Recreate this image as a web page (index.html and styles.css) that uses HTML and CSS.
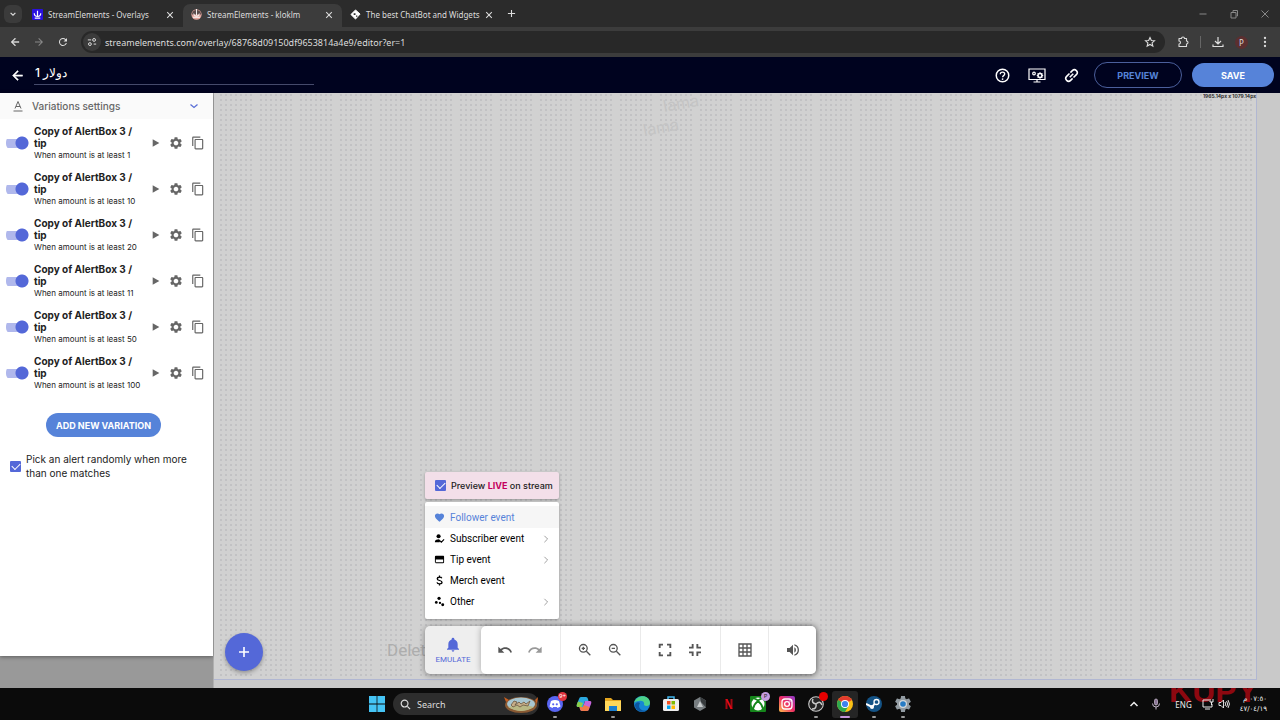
FILE: index.html
```
<!DOCTYPE html>
<html lang="en">
<head>
    <meta charset="UTF-8">
    <meta name="viewport" content="width=device-width, initial-scale=1.0">
    <title>StreamElements - kloklm</title>
    <link rel="stylesheet" href="styles.css">
</head>
<body>
    <svg class="sprite" aria-hidden="true">
        <symbol id="i-close" viewBox="0 0 10 10"><path d="M1.500 1.500l7 7M8.500 1.500l-7 7" fill="none" stroke="currentColor" stroke-width="1.300"/></symbol>
        <symbol id="i-back" viewBox="0 0 24 24"><path d="M20 11H7.830l5.590-5.590L12 4l-8 8 8 8 1.410-1.410L7.830 13H20v-2z" stroke="currentColor" stroke-width=".8"/></symbol>
        <symbol id="i-play" viewBox="0 0 24 24"><path d="M4 3v18l16-9z"/></symbol>
        <symbol id="i-gear" viewBox="0 0 24 24"><path d="M19.430 12.980c.04-.32.07-.64.07-.98s-.03-.66-.07-.98l2.110-1.650c.19-.15.24-.42.12-.64l-2-3.460c-.12-.22-.39-.3-.61-.22l-2.490 1c-.52-.4-1.080-.73-1.690-.98l-.38-2.650C14.460 2.180 14.250 2 14 2h-4c-.25 0-.46.18-.49.42l-.38 2.650c-.61.25-1.170.59-1.690.98l-2.490-1c-.23-.09-.49 0-.61.22l-2 3.460c-.13.22-.07.49.12.64l2.110 1.650c-.04.32-.07.65-.07.98s.03.66.07.98l-2.110 1.650c-.19.15-.24.42-.12.64l2 3.460c.12.22.39.3.61.22l2.490-1c.52.4 1.080.73 1.690.98l.38 2.650c.03.24.24.42.49.42h4c.25 0 .46-.18.49-.42l.38-2.650c.61-.25 1.170-.59 1.690-.98l2.490 1c.23.09.49 0 .61-.22l2-3.460c.12-.22.07-.49-.12-.64l-2.110-1.650zM12 16c-2.200 0-4-1.800-4-4s1.800-4 4-4 4 1.800 4 4-1.800 4-4 4z"/></symbol>
        <symbol id="i-copy" viewBox="0 0 24 24"><path d="M16 1H4c-1.100 0-2 .9-2 2v14h2V3h12V1zm3 4H8c-1.100 0-2 .9-2 2v14c0 1.100.9 2 2 2h11c1.100 0 2-.9 2-2V7c0-1.100-.9-2-2-2zm0 16H8V7h11v14z"/></symbol>
        <symbol id="i-right" viewBox="0 0 10 10"><path d="M3 1l4 4-4 4" fill="none" stroke="currentColor"/></symbol>
    </svg>

    <header class="tabs">
        <button class="tab-search" aria-label="Search tabs"><svg viewBox="0 0 10 10"><path d="M2 3.500l3 3 3-3" fill="none" stroke="currentColor" stroke-width="1.500"/></svg></button>
        <div class="tab">
            <svg class="favicon" viewBox="0 0 12 12"><rect width="12" height="12" rx="1" fill="#2a10e0"/><path d="M2.500 4.500a3.500 3.500 0 0 0 7 0M6 2v6M3 10h6" fill="none" stroke="#fff" stroke-width="1.300"/></svg>
            <span class="tab-name">StreamElements - Overlays</span>
            <button class="tab-close" aria-label="Close tab"><svg><use href="#i-close"/></svg></button>
        </div>
        <div class="tab active">
            <svg class="favicon" viewBox="0 0 12 12"><circle cx="6" cy="6" r="5.600" fill="#e0a39b"/><path d="M1 6a5 5 0 0 1 10 0z" fill="#5b4b4b"/><path d="M3 5a3 3 0 0 0 6 0M6 0v7M2 9h8" fill="none" stroke="#fff"/></svg>
            <span class="tab-name">StreamElements - kloklm</span>
            <button class="tab-close" aria-label="Close tab"><svg><use href="#i-close"/></svg></button>
        </div>
        <div class="tab">
            <svg class="favicon" viewBox="0 0 12 12"><path d="M6 1l5 4.500L6 11 1 6z" fill="#fff" stroke="#fff" stroke-linejoin="round"/><path d="M4 4.500h2v2H4zM6.500 7h1.500v1.500H6.500z" fill="#2b2b2b"/></svg>
            <span class="tab-name">The best ChatBot and Widgets</span>
            <button class="tab-close" aria-label="Close tab"><svg><use href="#i-close"/></svg></button>
        </div>
        <button class="tab-new" aria-label="New tab"><svg viewBox="0 0 10 10"><path d="M5 1v8M1 5h8" stroke="currentColor" stroke-width="1.200"/></svg></button>
        <div class="window-buttons">
            <button aria-label="Minimize"><svg viewBox="0 0 10 10"><path d="M1.500 5h7" stroke="currentColor"/></svg></button>
            <button aria-label="Restore"><svg viewBox="0 0 10 10"><path d="M2 3.500h5V9H2zM4 3V1.500h4.500V7H7.500" fill="none" stroke="currentColor"/></svg></button>
            <button aria-label="Close"><svg viewBox="0 0 10 10"><path d="M1.500 1.500l7 7M8.500 1.500l-7 7" fill="none" stroke="currentColor"/></svg></button>
        </div>
    </header>

    <div class="toolbar">
        <button aria-label="Back"><svg><use href="#i-back"/></svg></button>
        <button class="dim" aria-label="Forward"><svg viewBox="0 0 24 24"><path d="M4 11h12.170l-5.590-5.590L12 4l8 8-8 8-1.410-1.410L16.170 13H4v-2z"/></svg></button>
        <button aria-label="Reload"><svg viewBox="0 0 24 24"><path d="M17.650 6.350A8 8 0 1 0 19.730 14h-2.080A6 6 0 1 1 12 6c1.660 0 3.140.69 4.220 1.780L13 11h7V4z"/></svg></button>
        <div class="address">
            <span class="site-info"><svg viewBox="0 0 12 12"><path d="M1 3.500h4M8 8.500h3" stroke="#ddd" stroke-width="1.200"/><circle cx="8.500" cy="3.500" r="1.700" fill="none" stroke="#ddd" stroke-width="1.200"/><circle cx="3.500" cy="8.500" r="1.700" fill="none" stroke="#ddd" stroke-width="1.200"/></svg></span>
            <input type="text" aria-label="Address" value="streamelements.com/overlay/68768d09150df9653814a4e9/editor?er=1">
            <button aria-label="Bookmark"><svg viewBox="0 0 24 24"><path d="M12 3l2.700 6 6.300.6-4.800 4.300 1.500 6.300L12 17l-5.700 3.200 1.500-6.300L3 9.600 9.300 9z" fill="none" stroke="currentColor" stroke-width="2.200"/></svg></button>
        </div>
        <div class="browser-actions">
            <button aria-label="Extensions"><svg viewBox="0 0 24 24"><path d="M4 5h5c0-4 6-4 6 0h4v5c4 0 4 6 0 6v5H4v-5c4 0 4-6 0-6z" fill="none" stroke="currentColor" stroke-width="2.200" stroke-linejoin="round"/></svg></button>
            <button aria-label="Downloads"><svg viewBox="0 0 24 24"><path d="M12 2v13M6 10l6 6 6-6M2 17v4h20v-4" fill="none" stroke="currentColor" stroke-width="2.400"/></svg></button>
            <button class="avatar" aria-label="Profile">P</button>
            <button aria-label="Menu"><svg viewBox="0 0 24 24"><circle cx="12" cy="4" r="2.300"/><circle cx="12" cy="12" r="2.300"/><circle cx="12" cy="20" r="2.300"/></svg></button>
        </div>
    </div>

    <nav class="app-bar">
        <button class="icon-btn" aria-label="Back to overlays"><svg><use href="#i-back"/></svg></button>
        <input class="overlay-name" type="text" aria-label="Overlay name" value="1 دولار">
        <div class="app-actions">
            <button class="icon-btn" aria-label="Help"><svg viewBox="0 0 24 24"><circle cx="12" cy="12" r="10" fill="none" stroke="currentColor" stroke-width="2.400"/><path d="M8.500 10c0-4.800 7-4.300 7-.3 0 2.500-3.300 2.600-3.300 5" fill="none" stroke="currentColor" stroke-width="2.200"/><circle cx="12.100" cy="17.600" r="1.400"/></svg></button>
            <button class="icon-btn wide" aria-label="Resolution"><svg viewBox="0 0 18 15"><path d="M1 1h16v10.500H1zM5.500 14h7M9 11v3" fill="none" stroke="currentColor" stroke-width="1.200"/><circle cx="6" cy="5.500" r="1.300" fill="none" stroke="currentColor" stroke-width="1.200"/><circle cx="12" cy="7.500" r="2" fill="none" stroke="currentColor" stroke-width="1.500"/><path d="M12 4.300v1.500M12 9.200v1.500M8.800 7.500h1.500M13.700 7.500h1.500M9.700 5.200l1 1M13.300 8.800l1 1M14.300 5.200l-1 1M10.700 8.800l-1 1" stroke="currentColor"/></svg></button>
            <button class="icon-btn" aria-label="Copy link"><svg viewBox="0 0 24 24"><g transform="rotate(-45 12 12)" fill="none" stroke="currentColor" stroke-width="2.500"><path d="M12 7.500H5.500a4.500 4.500 0 0 0 0 9H10M12 16.500h6.500a4.500 4.500 0 0 0 0-9H14M8 12h8"/></g></svg></button>
            <button class="pill outline">PREVIEW</button>
            <button class="pill">SAVE</button>
        </div>
    </nav>

    <main class="editor">
        <aside class="sidebar">
            <div class="panel">
                <h2 class="panel-title">
                    <svg viewBox="0 0 12 12"><path d="M3 8.500L6 1.500l3 7M4 6.500h4M1.500 11h9" fill="none" stroke="currentColor"/></svg>
                    <span>Variations settings</span>
                    <svg class="chevron" viewBox="0 0 10 10"><path d="M1.500 3.500l3.500 3 3.500-3" fill="none" stroke="currentColor" stroke-width="1.300"/></svg>
                </h2>
                <ul class="variations">
                    <li>
                        <input class="switch" type="checkbox" id="v1" checked>
                        <label for="v1"><b>Copy of AlertBox 3 / tip</b><small>When amount is at least 1</small></label>
                        <button aria-label="Play"><svg class="play"><use href="#i-play"/></svg></button>
                        <button aria-label="Settings"><svg><use href="#i-gear"/></svg></button>
                        <button aria-label="Duplicate"><svg><use href="#i-copy"/></svg></button>
                    </li>
                    <li>
                        <input class="switch" type="checkbox" id="v2" checked>
                        <label for="v2"><b>Copy of AlertBox 3 / tip</b><small>When amount is at least 10</small></label>
                        <button aria-label="Play"><svg class="play"><use href="#i-play"/></svg></button>
                        <button aria-label="Settings"><svg><use href="#i-gear"/></svg></button>
                        <button aria-label="Duplicate"><svg><use href="#i-copy"/></svg></button>
                    </li>
                    <li>
                        <input class="switch" type="checkbox" id="v3" checked>
                        <label for="v3"><b>Copy of AlertBox 3 / tip</b><small>When amount is at least 20</small></label>
                        <button aria-label="Play"><svg class="play"><use href="#i-play"/></svg></button>
                        <button aria-label="Settings"><svg><use href="#i-gear"/></svg></button>
                        <button aria-label="Duplicate"><svg><use href="#i-copy"/></svg></button>
                    </li>
                    <li>
                        <input class="switch" type="checkbox" id="v4" checked>
                        <label for="v4"><b>Copy of AlertBox 3 / tip</b><small>When amount is at least 11</small></label>
                        <button aria-label="Play"><svg class="play"><use href="#i-play"/></svg></button>
                        <button aria-label="Settings"><svg><use href="#i-gear"/></svg></button>
                        <button aria-label="Duplicate"><svg><use href="#i-copy"/></svg></button>
                    </li>
                    <li>
                        <input class="switch" type="checkbox" id="v5" checked>
                        <label for="v5"><b>Copy of AlertBox 3 / tip</b><small>When amount is at least 50</small></label>
                        <button aria-label="Play"><svg class="play"><use href="#i-play"/></svg></button>
                        <button aria-label="Settings"><svg><use href="#i-gear"/></svg></button>
                        <button aria-label="Duplicate"><svg><use href="#i-copy"/></svg></button>
                    </li>
                    <li>
                        <input class="switch" type="checkbox" id="v6" checked>
                        <label for="v6"><b>Copy of AlertBox 3 / tip</b><small>When amount is at least 100</small></label>
                        <button aria-label="Play"><svg class="play"><use href="#i-play"/></svg></button>
                        <button aria-label="Settings"><svg><use href="#i-gear"/></svg></button>
                        <button aria-label="Duplicate"><svg><use href="#i-copy"/></svg></button>
                    </li>
                </ul>
                <button class="pill add">ADD NEW VARIATION</button>
                <div class="random">
                    <input class="check" type="checkbox" id="random" checked>
                    <label for="random">Pick an alert randomly when more than one matches</label>
                </div>
            </div>
        </aside>

        <section class="stage">
            <div class="canvas">
                <span class="ghost first">lama</span>
                <span class="ghost second">lama</span>
            </div>
            <span class="size">1965.14px x 1079.14px</span>
            <span class="hint">Delet</span>
            <button class="fab" aria-label="Add widget"><svg viewBox="0 0 12 12"><path d="M6 1v10M1 6h10" stroke="#fff" stroke-width="1.600"/></svg></button>

            <div class="dock">
                <div class="live">
                    <input class="check" type="checkbox" id="live" checked>
                    <label for="live">Preview <b>LIVE</b> on stream</label>
                </div>
                <div class="menu">
                    <button class="selected"><svg viewBox="0 0 24 24"><path d="M12 21.350l-1.450-1.320C5.400 15.360 2 12.280 2 8.500 2 5.420 4.420 3 7.500 3c1.740 0 3.410.81 4.500 2.090C13.090 3.810 14.760 3 16.500 3 19.580 3 22 5.420 22 8.500c0 3.780-3.400 6.860-8.550 11.540z"/></svg><span>Follower event</span></button>
                    <button><svg viewBox="0 0 24 24"><circle cx="10" cy="7" r="4.500"/><path d="M2 20v-2c0-3 5-4.500 9-4.500l3 3.500-2 3z"/><path d="M13 17l3 3 6-6" fill="none" stroke="currentColor" stroke-width="2.500"/></svg><span>Subscriber event</span><svg class="more"><use href="#i-right"/></svg></button>
                    <button><svg viewBox="0 0 24 24"><path d="M20 4H4c-1.110 0-2 .89-2 2v12c0 1.110.89 2 2 2h16c1.110 0 2-.89 2-2V6c0-1.110-.89-2-2-2zm0 14H4v-6h16v6z"/></svg><span>Tip event</span><svg class="more"><use href="#i-right"/></svg></button>
                    <button><svg viewBox="0 0 24 24"><path d="M17 7c-1-3-10-3-10 1 0 5 10.500 3 10.500 8 0 4.500-10 4.500-11 0M12 1v4M12 19v4" fill="none" stroke="currentColor" stroke-width="2.800"/></svg><span>Merch event</span></button>
                    <button><svg viewBox="0 0 24 24"><circle cx="11" cy="5" r="3.500"/><circle cx="5" cy="14" r="3"/><circle cx="13" cy="15" r="2.500"/><circle cx="19" cy="19" r="3.200"/></svg><span>Other</span><svg class="more"><use href="#i-right"/></svg></button>
                </div>
                <div class="tools">
                    <button class="emulate"><svg viewBox="0 0 24 24"><path d="M12 22c1.100 0 2-.9 2-2h-4c0 1.100.9 2 2 2zm7-6v-5c0-3.700-2-6.400-5-7.200V3a2 2 0 0 0-4 0v.8C7 4.600 5 7.300 5 11v5l-2 2v1h18v-1z"/></svg>EMULATE</button>
                    <div class="tool-bar">
                        <div class="group">
                            <button aria-label="Undo"><svg viewBox="0 0 24 24"><path d="M12.500 8c-2.650 0-5.050.99-6.900 2.600L2 7v9h9l-3.620-3.620c1.390-1.160 3.160-1.880 5.120-1.880 3.540 0 6.550 2.310 7.600 5.500l2.370-.78C21.080 11.030 17.150 8 12.500 8z"/></svg></button>
                            <button class="off" aria-label="Redo"><svg viewBox="0 0 24 24"><path d="M18.400 10.600C16.550 8.990 14.150 8 11.500 8c-4.650 0-8.580 3.030-9.960 7.220L3.900 16c1.050-3.190 4.050-5.500 7.600-5.500 1.950 0 3.730.72 5.120 1.880L13 16h9V7z"/></svg></button>
                        </div>
                        <div class="group">
                            <button aria-label="Zoom in"><svg viewBox="0 0 24 24"><circle cx="9.500" cy="9.500" r="5.800" fill="none" stroke="currentColor" stroke-width="2"/><path d="M14 14l6 6M9.500 7v5M7 9.500h5" stroke="currentColor" stroke-width="2"/></svg></button>
                            <button aria-label="Zoom out"><svg viewBox="0 0 24 24"><circle cx="9.500" cy="9.500" r="5.800" fill="none" stroke="currentColor" stroke-width="2"/><path d="M14 14l6 6M7 9.500h5" stroke="currentColor" stroke-width="2"/></svg></button>
                        </div>
                        <div class="group">
                            <button aria-label="Fit"><svg viewBox="0 0 24 24"><path d="M4 9V4h5M15 4h5v5M20 15v5h-5M9 20H4v-5" fill="none" stroke="currentColor" stroke-width="2.800"/></svg></button>
                            <button aria-label="Shrink"><svg viewBox="0 0 24 24"><path d="M3 8.500h5.500V3M15.500 3v5.500H21M21 15.500h-5.500V21M8.500 21v-5.500H3" fill="none" stroke="currentColor" stroke-width="2.800"/></svg></button>
                        </div>
                        <div class="group">
                            <button aria-label="Grid"><svg viewBox="0 0 24 24"><path d="M3 3h18v18H3zM9 3v18M15 3v18M3 9h18M3 15h18" fill="none" stroke="currentColor" stroke-width="2"/></svg></button>
                        </div>
                        <div class="group">
                            <button aria-label="Sound"><svg viewBox="0 0 24 24"><path d="M3 9v6h4l5 5V4L7 9H3zm13.500 3A4.500 4.500 0 0 0 14 7.970v8.050A4.500 4.500 0 0 0 16.500 12zM14 3.230v2.060a7 7 0 0 1 0 13.420v2.060a9 9 0 0 0 0-17.540z"/></svg></button>
                        </div>
                    </div>
                </div>
            </div>
        </section>
    </main>

    <footer class="taskbar">
        <span class="wallpaper-text">KUPY</span>
        <div class="apps">
            <button class="app" aria-label="Start"><svg viewBox="0 0 16 16"><path d="M0 0h7.600v7.600H0zM8.400 0H16v7.600H8.400zM0 8.400h7.600V16H0zM8.400 8.400H16V16H8.400z" fill="#45c4f5"/></svg></button>
            <div class="search">
                <svg class="lens" viewBox="0 0 12 12"><circle cx="5" cy="5" r="3.700" fill="none" stroke="#ddd" stroke-width="1.300"/><path d="M8 8l3 3" stroke="#ddd" stroke-width="1.400"/></svg>
                <input type="search" aria-label="Search" placeholder="Search">
                <svg class="doodle" viewBox="0 0 34 17"><ellipse cx="17" cy="9" rx="16" ry="8" fill="#8a5a33"/><ellipse cx="17" cy="8" rx="14" ry="6.500" fill="#a8c6d0"/><path d="M4 11q13-4 26 0-13 8-26 0z" fill="#b9b884"/><path d="M7 9l3-4 3 1-2 3 4-3 2 2 3-2 2 2 4-3-2 5-5-1-3 2-3-2-4 2z" fill="#c7ae88" stroke="#6b573f" stroke-width=".8"/><path d="M2 6L0 1l5 3zM31 4l3-3-1 7z" fill="#c85f20"/></svg>
            </div>
            <button class="app open" aria-label="Discord"><svg viewBox="0 0 16 16"><circle cx="8" cy="8" r="8" fill="#5865f2"/><path d="M4 5q4-2 8 0l1.500 5.500L10.500 12l-.7-1H6.200l-.7 1-3-1.500z" fill="#fff"/><circle cx="6.200" cy="8.300" r="1.100" fill="#5865f2"/><circle cx="9.800" cy="8.300" r="1.100" fill="#5865f2"/></svg><span class="badge">9+</span></button>
            <button class="app" aria-label="Copilot"><svg viewBox="0 0 16 16"><path d="M5 1h5q1.500 0 2 2l.5 2H9L7 11H2Q0 11 1 8l2-5q.5-2 2-2z" fill="#2ba9e0"/><path d="M2 5.500L7 7l-1.500 4H2Q0 11 1 8z" fill="#8bd04b"/><path d="M11 15H6q-1.500 0-2-2l-.5-2H7l2-6h5q2 0 1 3l-2 5q-.5 2-2 2z" fill="#c565dc"/><path d="M11 15H6q-1.500 0-2-2l-.5-2H7l.6-2 6 2-.6 2q-.5 2-2 2z" fill="#f07a4a"/></svg></button>
            <button class="app open" aria-label="Files"><svg viewBox="0 0 16 16"><path d="M0 2h6l2 2h8v11H0z" fill="#e5a61f"/><path d="M0 5h16v10H0z" fill="#ffd75a"/><path d="M4 10h8v5H4z" fill="#1b7fd1"/></svg></button>
            <button class="app" aria-label="Edge"><svg viewBox="0 0 16 16"><circle cx="8" cy="8" r="8" fill="#1687d4"/><path d="M0 7C2-2 16-2 16 7c0 3-4 4-6 2 1-3-2-5-5-4-3 0-4 1-5 2z" fill="#4cd28a"/><path d="M6 7c-3 5 2 9 7 7-4 4-12 1-12-5 0-2 3-4 5-2z" fill="#0c56a0"/></svg></button>
            <button class="app" aria-label="Store"><svg viewBox="0 0 16 16"><path d="M5 4V1h6v3" fill="none" stroke="#43b6ee" stroke-width="1.500"/><rect y="3" width="16" height="12" rx="1.500" fill="#eee"/><path d="M4 5h3.500v3.500H4z" fill="#f25022"/><path d="M8.500 5H12v3.500H8.500z" fill="#7fba00"/><path d="M4 9.500h3.500V13H4z" fill="#00a4ef"/><path d="M8.500 9.500H12V13H8.500z" fill="#ffb900"/></svg></button>
            <button class="app" aria-label="Cube"><svg viewBox="0 0 16 16"><path d="M8 1l6 3.500v7L8 15l-6-3.500v-7z" fill="#777d80"/><path d="M8 1l6 3.500v7L9 6z" fill="#373b3d"/><path d="M8 5l3 6-6 0z" fill="#c8cccd"/></svg></button>
            <button class="app" aria-label="Netflix"><svg viewBox="0 0 16 16"><path d="M5.500 3v10M10.500 3v10" stroke="#a40912" stroke-width="2"/><path d="M4.500 3h2l5 10h-2z" fill="#e50914"/></svg></button>
            <button class="app" aria-label="Xbox"><svg viewBox="0 0 16 16"><rect width="16" height="16" rx="1" fill="#15861b"/><circle cx="8" cy="8" r="6.500" fill="#fff"/><path d="M3 13Q4 8 8 5q4 3 5 8M4 2.500Q6 3 8 4.500 10 3 12 2.500" fill="none" stroke="#15861b" stroke-width="1.800"/></svg><span class="badge lilac">P</span></button>
            <button class="app" aria-label="Instagram"><svg viewBox="0 0 16 16"><defs><linearGradient id="insta" x1="0" y1="1" x2="1" y2="0"><stop offset="0" stop-color="#fdc04a"/><stop offset=".5" stop-color="#ee2d64"/><stop offset="1" stop-color="#8b3bd0"/></linearGradient></defs><rect width="16" height="16" rx="2" fill="url(#insta)"/><rect x="3" y="3" width="10" height="10" rx="3" fill="none" stroke="#fff" stroke-width="1.300"/><circle cx="8" cy="8" r="2.400" fill="none" stroke="#fff" stroke-width="1.300"/><circle cx="11" cy="5" r=".7" fill="#fff"/></svg></button>
            <button class="app open" aria-label="OBS"><svg viewBox="0 0 16 16"><circle cx="8" cy="8" r="7.300" fill="#252525" stroke="#c8c8c8" stroke-width="1.100"/><path d="M8 8Q3 7 5 3M8 8q4-4 6 1M8 8q1 5-4 5" fill="none" stroke="#c8c8c8" stroke-width="1.500"/></svg><span class="badge red"></span></button>
            <button class="app open current" aria-label="Chrome"><svg viewBox="0 0 16 16"><circle cx="8" cy="8" r="8" fill="#fbc116"/><path d="M8 8L1.100 4A8 8 0 0 1 14.900 4z" fill="#e33b2e"/><path d="M8 8v0L1.100 4A8 8 0 0 0 8 16l3.500-6z" fill="#2da94f"/><circle cx="8" cy="8" r="4" fill="#fff"/><circle cx="8" cy="8" r="3.100" fill="#3d82ee"/></svg></button>
            <button class="app open" aria-label="Steam"><svg viewBox="0 0 16 16"><circle cx="8" cy="8" r="8" fill="#145386"/><path d="M0 8l6 3 4-5" fill="none" stroke="#fff" stroke-width="2"/><circle cx="10.500" cy="6" r="2.500" fill="#145386" stroke="#fff" stroke-width="1.300"/><circle cx="6" cy="11" r="2" fill="#fff"/></svg></button>
            <button class="app open" aria-label="Settings"><svg viewBox="2 2 20 20"><use href="#i-gear" width="24" height="24" fill="#929ba2"/><circle cx="12" cy="12" r="5" fill="#d6dadd"/><circle cx="12" cy="12" r="3.500" fill="#277bc4"/></svg></button>
        </div>
        <div class="tray">
            <svg viewBox="0 0 12 12"><path d="M2.500 8L6 4.500 9.500 8" fill="none" stroke="currentColor" stroke-width="1.500"/></svg>
            <svg viewBox="0 0 12 12"><rect x="4.500" y="1" width="3" height="6" rx="1.500" fill="#8a7495" stroke="#c2b5c9" stroke-width=".8"/><path d="M2.500 5.500a3.500 3.500 0 0 0 7 0M6 9v2.500" fill="none" stroke="#c2b5c9"/></svg>
            <span class="lang">ENG</span>
            <span class="status">
                <svg viewBox="0 0 12 12"><path d="M7 2H1v7h9V6M3 11h5M8 1v3h3V1M9.500 4v3" fill="none" stroke="currentColor"/></svg>
                <svg viewBox="0 0 12 12"><path d="M1 4.500h2L5.500 2v8L3 7.500H1zM7 4q1.500 2 0 4M8.500 3q2.500 3 0 6M10 2q3 4 0 8" fill="none" stroke="currentColor" stroke-width=".9"/></svg>
            </span>
            <span class="clock" dir="rtl" lang="ar"><span>٠٧:٥٠ م</span><span dir="ltr">٤٧/٠٤/١٩</span></span>
        </div>
    </footer>
</body>
</html>
```
FILE: styles.css
```
* {
    box-sizing: border-box;
}
body {
    margin: 0;
    min-height: 100vh;
    display: flex;
    flex-direction: column;
    font-family: Inter, "Noto Sans", sans-serif;
    font-size: 9px;
    color: #222;
    background: #0b0b0b;
}
button {
    display: flex;
    align-items: center;
    justify-content: center;
    padding: 0;
    border: none;
    background: none;
    color: inherit;
    font: inherit;
    cursor: pointer;
}
input {
    margin: 0;
    font: inherit;
    color: inherit;
}
svg {
    display: block;
    width: 12px;
    height: 12px;
    flex: none;
    fill: currentColor;
}
.sprite {
    position: absolute;
    width: 0;
    height: 0;
}

/* browser */
.tabs {
    display: flex;
    align-items: center;
    height: 27px;
    padding-left: 4px;
    background: #2b2b2b;
    color: #ddd;
    font-family: "Noto Sans", sans-serif;
    font-size: 8px;
}
.tab-search {
    width: 18px;
    height: 18px;
    margin-right: 2px;
    border-radius: 6px;
    background: #3b3b3b;
}
.tab-search svg,
.tab-close svg {
    width: 8px;
    height: 8px;
}
.tab {
    display: flex;
    align-items: center;
    gap: 5px;
    width: 159px;
    height: 23px;
    padding: 0 9px 2px 8px;
    border-radius: 7px 7px 0 0;
    align-self: flex-end;
}
.tab.active {
    background: #3c3c3c;
}
.favicon {
    width: 11px;
    height: 11px;
}
.tab-name {
    flex: 1;
    white-space: nowrap;
}
.tab-new {
    margin-left: 6px;
}
.tab-new svg {
    width: 9px;
    height: 9px;
}
.window-buttons {
    display: flex;
    gap: 21px;
    margin-left: auto;
    padding-right: 10px;
    color: #888;
}
.window-buttons svg {
    width: 10px;
    height: 10px;
}
.toolbar {
    display: flex;
    align-items: center;
    gap: 12px;
    height: 30px;
    padding: 0 9px;
    background: #3c3c3c;
    color: #ddd;
    font-family: "Noto Sans", sans-serif;
}
.toolbar .dim {
    color: #888;
}
.address {
    flex: 1;
    display: flex;
    align-items: center;
    height: 22px;
    padding: 0 9px 0 2px;
    border-radius: 11px;
    background: #282828;
}
.address input {
    flex: 1;
    padding: 0 4px;
    border: none;
    background: none;
    outline: none;
}
.site-info {
    display: flex;
    align-items: center;
    justify-content: center;
    width: 18px;
    height: 18px;
    border-radius: 50%;
    background: #3b3b3b;
}
.site-info svg {
    width: 10px;
    height: 10px;
}
.browser-actions {
    display: flex;
    align-items: center;
    gap: 11px;
}
.browser-actions button:nth-child(2) {
    padding-left: 11px;
    border-left: 1px solid #666;
}
.avatar {
    width: 13px;
    height: 13px;
    border-radius: 50%;
    background: #5b2f30;
    font-size: 8px;
}

/* app header */
.app-bar {
    display: flex;
    align-items: center;
    height: 36px;
    padding: 0 6px 0 10px;
    background: #00031f;
    color: #fff;
}
.icon-btn svg {
    width: 15px;
    height: 15px;
}
.icon-btn.wide svg {
    width: 18px;
}
.overlay-name {
    width: 280px;
    height: 20px;
    margin-left: 9px;
    padding: 0 0 5px 1px;
    border: none;
    border-bottom: 1px solid #454a6b;
    background: none;
    outline: none;
    font-size: 12px;
    font-weight: 500;
}
.app-actions {
    display: flex;
    align-items: center;
    gap: 18px;
    margin-left: auto;
}
.pill {
    width: 82px;
    height: 24px;
    border-radius: 13px;
    background: #5683d9;
    color: #fff;
    font-size: 9px;
    font-weight: 700;
}
.pill.outline {
    width: 88px;
    height: 26px;
    margin: 0 -8px 0 -3px;
    border: 1px solid #4b5f9c;
    background: none;
    color: #5683d9;
}

/* sidebar */
.editor {
    flex: 1;
    display: flex;
}
.sidebar {
    width: 214px;
    padding-bottom: 32px;
    display: flex;
    background: #999;
    border-right: 1px solid #b0b0b0;
}
.panel {
    flex: 1;
    background: #fff;
    box-shadow: 0 1px 4px rgba(0, 0, 0, 0.4);
}
.panel-title {
    display: flex;
    align-items: center;
    gap: 8px;
    height: 26px;
    margin: 0;
    padding: 0 14px 0 12px;
    background: #fafafa;
    color: #666;
    font-size: 10px;
    font-weight: 500;
}
.panel-title .chevron {
    width: 10px;
    height: 10px;
    margin-left: auto;
    color: #5a6fd6;
}
.variations {
    margin: 0;
    padding: 1px 0 0;
    list-style: none;
}
.variations li {
    display: flex;
    align-items: center;
    gap: 8px;
    height: 46px;
    padding: 0 8px 0 6px;
    color: #666;
}
.variations label {
    flex: 1;
    margin-left: -3px;
    color: #222;
}
.variations b {
    display: block;
    width: 104px;
    font-size: 10px;
    font-weight: 700;
    line-height: 12px;
}
.variations small {
    display: block;
    font-size: 8px;
    line-height: 13px;
    white-space: nowrap;
}
.variations svg {
    width: 14px;
    height: 14px;
}
.variations .play {
    width: 10px;
    height: 10px;
}
.switch {
    appearance: none;
    flex: none;
    width: 23px;
    height: 14px;
    background:
        radial-gradient(circle at 16px 7px, #5468d8 6px, transparent 7px),
        linear-gradient(#b0b8ec, #b0b8ec) 0 3px / 20px 9px no-repeat;
    border-radius: 6px;
}
.pill.add {
    width: 115px;
    margin: 17px auto 15px 46px;
}
.check {
    appearance: none;
    flex: none;
    width: 11px;
    height: 11px;
    border-radius: 1px;
    background: #5468d8;
    display: grid;
    place-items: center;
}
.check:checked::before {
    content: "";
    width: 7px;
    height: 4px;
    margin-bottom: 2px;
    border: solid #fff;
    border-width: 0 0 1px 1px;
    transform: rotate(-45deg);
}
.random {
    display: flex;
    align-items: center;
    gap: 5px;
    padding: 0 16px 0 10px;
    font-size: 10px;
    line-height: 14px;
}

/* stage */
.stage {
    position: relative;
    flex: 1;
    display: flex;
    padding: 0 23px 8px 0;
    background: #c9c9c9;
}
.canvas {
    position: relative;
    flex: 1;
    border: solid #b1b7d2;
    border-width: 0 1px 1px 0;
    background:
        linear-gradient(90deg, #d1d1d1 5px, transparent 5px) 0 0 / 40px 40px,
        radial-gradient(circle at 2px 2px, #c2c2c4 1px, transparent 1px) 0 0 / 5px 5px,
        #d1d1d1;
}
.ghost {
    position: absolute;
    color: #c4c4c4;
    font-size: 16px;
    transform: rotate(-10deg);
}
.ghost.first {
    left: 449px;
    top: 0;
}
.ghost.second {
    left: 429px;
    top: 24px;
}
.size {
    position: absolute;
    top: 0;
    right: 24px;
    font-size: 5px;
    font-weight: 600;
    line-height: 7px;
}
.hint {
    position: absolute;
    left: 173px;
    bottom: 26px;
    color: #adadad;
    font-family: Roboto, sans-serif;
    font-size: 17px;
    line-height: 24px;
}
.fab {
    position: absolute;
    left: 11px;
    bottom: 17px;
    width: 38px;
    height: 38px;
    border-radius: 50%;
    background: #5468d8;
    box-shadow: 0 2px 4px rgba(0, 0, 0, 0.3);
}

/* emulate menu and tools */
.dock {
    position: absolute;
    left: 211px;
    bottom: 14px;
}
.live,
.menu {
    width: 134px;
    border-radius: 2px;
    box-shadow: 0 1px 3px rgba(0, 0, 0, 0.3);
}
.live {
    display: flex;
    align-items: center;
    gap: 5px;
    height: 27px;
    padding-left: 10px;
    margin-bottom: 3px;
    background: #f3dfe9;
    font-size: 9px;
    font-weight: 500;
    white-space: nowrap;
}
.live b {
    color: #c4005d;
}
.menu {
    padding: 4px 0 7px;
    margin-bottom: 7px;
    background: #fff;
    color: #000;
    font-family: Roboto, sans-serif;
    font-size: 10px;
}
.menu button {
    gap: 5px;
    width: 100%;
    height: 21px;
    padding: 0 9px;
    justify-content: flex-start;
}
.menu svg {
    width: 11px;
    height: 11px;
}
.menu .more {
    width: 8px;
    height: 8px;
    margin-left: auto;
    color: #888;
}
.menu .selected {
    height: 22px;
    background: #f6f6f6;
    color: #5683d9;
}
.tools {
    display: flex;
    width: max-content;
    height: 48px;
    border-radius: 5px;
    background: #eee;
    box-shadow: 0 1px 6px rgba(0, 0, 0, 0.4);
}
.emulate {
    flex-direction: column;
    gap: 2px;
    width: 56px;
    color: #5468d8;
    font-family: Roboto, sans-serif;
    font-size: 8px;
}
.emulate svg {
    width: 16px;
    height: 16px;
}
.tool-bar {
    display: flex;
    border-radius: 5px;
    background: #fff;
    box-shadow: 0 0 6px rgba(0, 0, 0, 0.3);
    color: #555;
}
.group {
    display: flex;
    align-items: center;
    gap: 14px;
    padding: 0 17px 0 16px;
}
.group:nth-child(n+4) {
    padding: 0 15px 0 16px;
}
.group + .group {
    border-left: 1px solid #eaeaea;
}
.group svg {
    width: 16px;
    height: 16px;
}
.group .off {
    color: #999;
}

/* taskbar */
.taskbar {
    position: relative;
    display: flex;
    align-items: center;
    justify-content: center;
    height: 32px;
    overflow: hidden;
    background: #0b0b0b;
    color: #eee;
    font-family: "Noto Sans", sans-serif;
    font-size: 8px;
}
.wallpaper-text {
    position: absolute;
    right: 22px;
    top: -13px;
    color: #8d0810;
    font-family: "Liberation Sans", sans-serif;
    font-size: 32px;
    font-weight: 700;
    line-height: 32px;
}
.apps {
    display: flex;
    align-items: center;
    gap: 3px;
}
.app {
    position: relative;
    width: 26px;
    height: 27px;
}
.app > svg {
    width: 16px;
    height: 16px;
}
.app.open::after {
    content: "";
    position: absolute;
    bottom: 0;
    width: 4px;
    height: 2px;
    border-radius: 1px;
    background: #999;
}
.app.current {
    border-radius: 3px;
    background: #252525;
}
.app.current::after {
    width: 10px;
    background: #c795dd;
}
.badge {
    position: absolute;
    top: 1px;
    right: 1px;
    width: 9px;
    height: 9px;
    border-radius: 50%;
    background: #e0343f;
    color: #fff;
    font-size: 6px;
    line-height: 9px;
    text-align: center;
}
.badge.lilac {
    background: #c69be0;
    color: #222;
}
.badge.red {
    background: #e60000;
}
.search {
    display: flex;
    align-items: center;
    gap: 6px;
    width: 146px;
    height: 22px;
    padding: 0 1px 0 7px;
    border-radius: 11px;
    background: #2d2d2d;
}
.search input {
    flex: 1;
    min-width: 0;
    padding: 0;
    border: none;
    background: none;
    font-size: 9px;
}
.search input::placeholder {
    color: #ddd;
}
.search .lens {
    width: 11px;
    height: 11px;
}
.search .doodle {
    width: 34px;
    height: 17px;
}
.tray {
    position: absolute;
    right: 13px;
    display: flex;
    align-items: center;
    gap: 10px;
}
.lang {
    margin-left: 3px;
}
.status {
    display: flex;
    gap: 4px;
}
.clock {
    display: flex;
    flex-direction: column;
    align-items: flex-start;
    font-family: "DejaVu Sans", sans-serif;
    font-size: 7px;
    line-height: 10px;
}
```
